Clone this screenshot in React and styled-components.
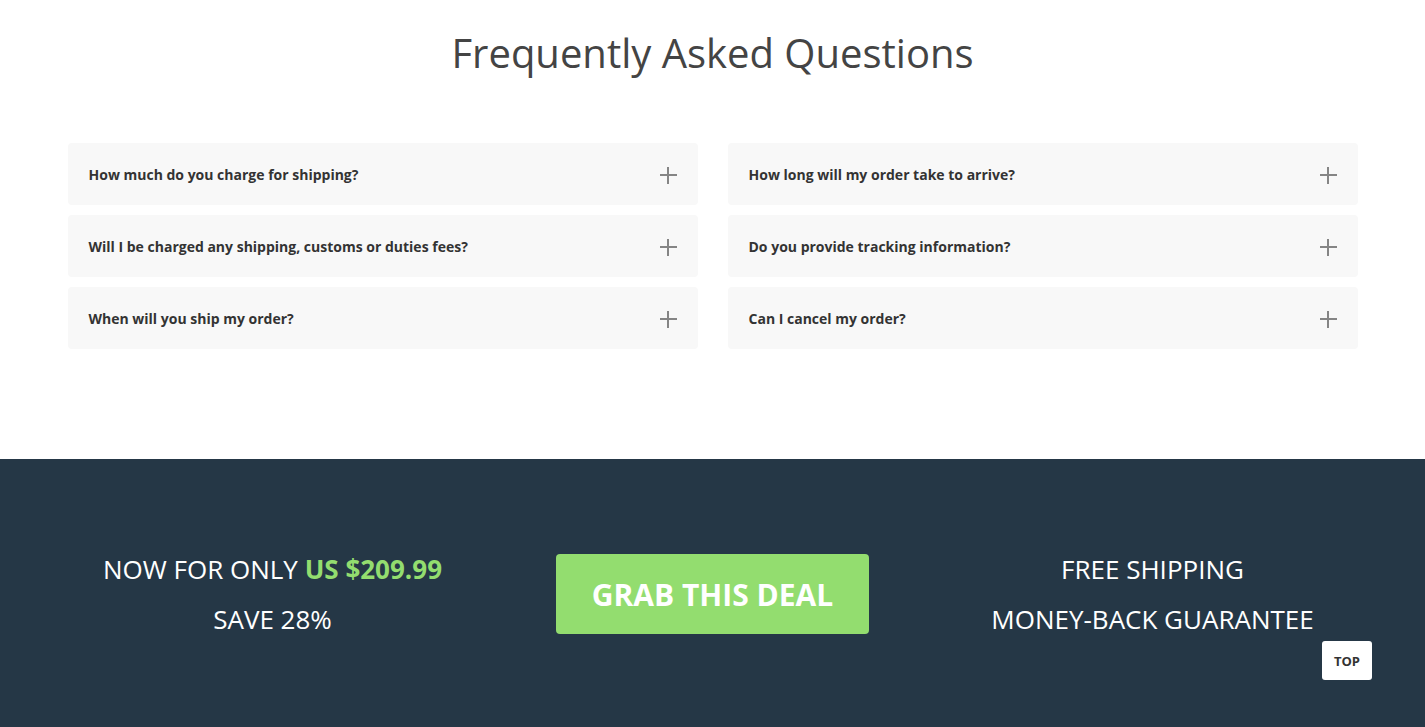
import React from "react";
import styled, { createGlobalStyle } from "styled-components";

const GlobalStyle = createGlobalStyle`
  body {
    margin: 0;
    font-family: "Open Sans", "Noto Sans", sans-serif;
    background: #fff;
  }
  * { box-sizing: border-box; }
`;

const FaqSection = styled.section`
  padding: 29px 0 110px;
`;

const Title = styled.h2`
  margin: 0 0 66px;
  text-align: center;
  font-size: 40px;
  font-weight: 400;
  line-height: 48px;
  color: #444;
`;

const FaqGrid = styled.div`
  width: 1290px;
  margin: 0 auto;
  display: grid;
  grid-template-columns: 1fr 1fr;
  column-gap: 30px;
  row-gap: 10px;
`;

const FaqItem = styled.div`
  height: 62px;
  padding: 0 21px;
  background: #f8f8f8;
  border-radius: 4px;
  display: flex;
  align-items: center;
  justify-content: space-between;
  cursor: pointer;
`;

const Question = styled.span`
  font-size: 14px;
  font-weight: 700;
  color: #333;
`;

const Plus = styled.span`
  position: relative;
  width: 17px;
  height: 17px;
  margin-top: 2px;
  &::before,
  &::after {
    content: "";
    position: absolute;
    background: #858585;
  }
  &::before {
    left: 0;
    right: 0;
    top: 7.5px;
    height: 2px;
  }
  &::after {
    top: 0;
    bottom: 0;
    left: 7.5px;
    width: 2px;
  }
`;

const DealSection = styled.section`
  position: relative;
  background: #253746;
  height: 268px;
  display: flex;
  align-items: center;
  justify-content: center;
`;

const DealRow = styled.div`
  width: 1320px;
  display: grid;
  grid-template-columns: repeat(3, 1fr);
  align-items: center;
  margin-top: 2px;
`;

const DealText = styled.div`
  text-align: center;
  color: #fff;
  font-size: 26px;
  line-height: 50px;
`;

const Price = styled.span`
  color: #93dd6f;
  font-weight: 700;
`;

const ButtonCell = styled.div`
  display: flex;
  justify-content: center;
`;

const DealButton = styled.button`
  width: 313px;
  height: 80px;
  border: none;
  border-radius: 4px;
  background: #93dd6f;
  color: #fff;
  font-family: inherit;
  font-size: 30px;
  font-weight: 700;
  cursor: pointer;
`;

const TopButton = styled.button`
  position: absolute;
  right: 53px;
  top: 182px;
  width: 50px;
  height: 39px;
  border: none;
  border-radius: 3px;
  background: #fff;
  color: #333;
  font-family: inherit;
  font-size: 13px;
  font-weight: 700;
  cursor: pointer;
`;

const questions = [
  "How much do you charge for shipping?",
  "How long will my order take to arrive?",
  "Will I be charged any shipping, customs or duties fees?",
  "Do you provide tracking information?",
  "When will you ship my order?",
  "Can I cancel my order?",
];

export default function App() {
  return (
    <>
      <GlobalStyle />
      <FaqSection>
        <Title>Frequently Asked Questions</Title>
        <FaqGrid>
          {questions.map((q) => (
            <FaqItem key={q}>
              <Question>{q}</Question>
              <Plus />
            </FaqItem>
          ))}
        </FaqGrid>
      </FaqSection>
      <DealSection>
        <DealRow>
          <DealText>
            <div>
              NOW FOR ONLY <Price>US $209.99</Price>
            </div>
            <div>SAVE 28%</div>
          </DealText>
          <ButtonCell>
            <DealButton>GRAB THIS DEAL</DealButton>
          </ButtonCell>
          <DealText>
            <div>FREE SHIPPING</div>
            <div>MONEY-BACK GUARANTEE</div>
          </DealText>
        </DealRow>
        <TopButton>TOP</TopButton>
      </DealSection>
    </>
  );
}
